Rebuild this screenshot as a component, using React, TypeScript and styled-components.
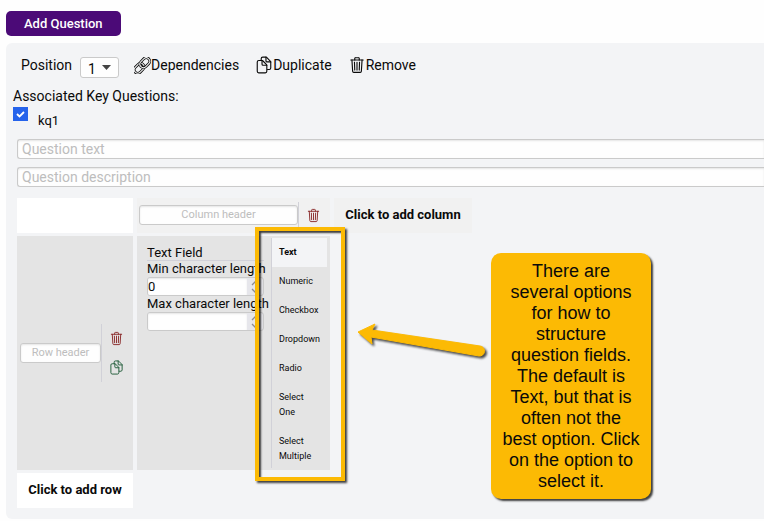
import React from "react";
import styled, { createGlobalStyle, css } from "styled-components";
import { IoTrashOutline, IoDocumentsOutline } from "react-icons/io5";

const GlobalStyle = createGlobalStyle`
  *, *::before, *::after { box-sizing: border-box; }
  body {
    margin: 0;
    overflow-x: hidden;
    background: #fefefe;
    color: #0a0a0a;
    font-family: Roboto, "Liberation Sans", sans-serif;
    font-size: 14px;
    line-height: 18px;
  }
  button, input, select { font: inherit; color: inherit; }
  button { border: 0; padding: 0; background: none; cursor: pointer; }
`;

const Page = styled.main`
  position: relative;
  padding: 11px 0 2px 6px;
`;

const PrimaryButton = styled.button`
  display: block;
  height: 25px;
  padding: 0 18px;
  border-radius: 5px;
  background: #4b0a77;
  color: #fefefe;
  font-size: 13px;
  font-weight: 500;
`;

const Panel = styled.section`
  margin-top: 7px;
  padding: 12px 0 11px 11px;
  border-radius: 6px 0 0 6px;
  background: #f3f4f6;
`;

const Toolbar = styled.div`
  display: flex;
  align-items: flex-start;
  height: 32px;
  padding: 1px 0 0 4px;
`;

const PositionLabel = styled.label`
  display: flex;
  gap: 8px;
  margin-right: 15px;
`;

const SelectWrap = styled.span`
  position: relative;
  display: block;
  margin-top: 1px;
`;

const PositionSelect = styled.select`
  appearance: none;
  display: block;
  width: 39px;
  height: 21px;
  padding: 2px 0 0 7px;
  border: 1px solid #cacaca;
  border-radius: 3px;
  background: #fefefe;
  line-height: 16px;
`;

const Caret = styled.svg`
  position: absolute;
  right: 8px;
  top: 8px;
  pointer-events: none;
`;

const ToolButton = styled.button`
  display: flex;
  align-items: center;
  height: 18px;
  margin-right: 16px;
  svg { flex: none; }
`;

const KeyQuestions = styled.fieldset`
  margin: 0 0 8px -4px;
  padding: 0;
  border: 0;
  legend { padding: 0; }
`;

const CheckLabel = styled.label`
  display: flex;
  gap: 10px;
  height: 26px;
  font-size: 13px;
  span { padding-top: 7px; }
`;

const CheckBox = styled.input`
  appearance: none;
  width: 15px;
  height: 14px;
  margin: 2px 0 0;
  background: #2563eb
    url("data:image/svg+xml,%3Csvg xmlns='http://www.w3.org/2000/svg' viewBox='0 0 15 14'%3E%3Cpath d='M4 7l2.500 2.500L11 5' fill='none' stroke='white' stroke-width='1.800'/%3E%3C/svg%3E")
    center / 15px 14px no-repeat;
`;

const field = css`
  display: block;
  height: 20px;
  margin: 0;
  border: 1px solid #cacaca;
  border-radius: 3px;
  background: #fefefe;
  box-shadow: inset 0 1px 2px rgba(10, 10, 10, 0.1);
  &::placeholder { color: #bdbdbd; opacity: 1; }
`;

const WideInput = styled.input`
  ${field}
  width: 100%;
  margin-bottom: 8px;
  padding: 0 4px;
  border-right: 0;
  border-radius: 3px 0 0 3px;
`;

const HeaderInput = styled.input`
  ${field}
  flex: 1;
  min-width: 0;
  padding: 0 4px 1px;
  font-size: 11px;
  text-align: center;
`;

const Matrix = styled.div`
  display: grid;
  grid-template-columns: 116px 193px 138px;
  grid-template-rows: 35px auto 35px;
  gap: 3px 4px;
  margin-top: 11px;
`;

const Cell = styled.div<{ $tone: "white" | "light" | "grey" }>`
  display: flex;
  align-items: center;
  background: ${({ $tone }) =>
    ({ white: "#ffffff", light: "#f1f1f1", grey: "#e4e4e4" })[$tone]};
`;

const ColumnHeadCell = styled(Cell)`
  padding: 0 2px 1px;
`;

const RowHeadCell = styled(Cell)`
  padding: 0 2px 0 3px;
`;

const AddButton = styled.button<{ $tone: "white" | "light" }>`
  padding-bottom: 2px;
  font-size: 13px;
  font-weight: 700;
  background: ${({ $tone }) => ($tone === "white" ? "#ffffff" : "#f1f1f1")};
`;

const Actions = styled.div<{ $tall?: boolean }>`
  display: flex;
  flex-direction: column;
  align-items: center;
  justify-content: center;
  gap: 14px;
  flex: none;
  width: 30px;
  height: ${({ $tall }) => ($tall ? "58px" : "27px")};
  border-left: 1px solid #d1d1d8;
`;

const IconButton = styled.button<{ $color: string }>`
  display: flex;
  color: ${({ $color }) => $color};
`;

const FieldCell = styled(Cell)`
  align-items: flex-start;
  padding: 2px 3px 2px 10px;
`;

const Settings = styled.div`
  flex: 1;
  min-width: 0;
  padding-top: 6px;
  font-size: 13px;
`;

const FieldTitle = styled.div`
  height: 17px;
  border-bottom: 1px solid #d1d1d8;
`;

const Setting = styled.label`
  display: block;
  white-space: nowrap;
  line-height: 16px;
`;

const NumberBox = styled.span`
  display: flex;
  width: 117px;
  height: 19px;
  overflow: hidden;
  border: 1px solid #cacaca;
  border-radius: 3px;
  background: #e6e6eb;
  color: #8b8b90;
  svg { margin: auto; }
`;

const NumberInput = styled.input`
  appearance: textfield;
  width: 99px;
  padding: 0;
  border: 0;
  background: #fefefe;
  color: #0a0a0a;
  box-shadow: inset 0 1px 2px rgba(10, 10, 10, 0.1);
  &::-webkit-inner-spin-button { display: none; }
`;

const TypeList = styled.div`
  width: 56px;
  margin-left: 7px;
  border-left: 1px solid #d1d1d8;
`;

const TypeButton = styled.button<{ $active?: boolean }>`
  display: block;
  width: 100%;
  padding: 7px;
  font-size: 9px;
  line-height: 15px;
  text-align: left;
  font-weight: ${({ $active }) => ($active ? 700 : 400)};
  background: ${({ $active }) => ($active ? "#f3f4f6" : "transparent")};
  &:last-child { padding-bottom: 4px; }
`;

const Highlight = styled.div`
  position: absolute;
  left: 255px;
  top: 227px;
  width: 90px;
  height: 254px;
  border: 4px solid #fcba04;
  box-shadow: 2px 2px 2px rgba(0, 0, 0, 0.75), inset 2px 2px 2px rgba(0, 0, 0, 0.75);
  pointer-events: none;
`;

const Arrow = styled.svg`
  position: absolute;
  left: 355px;
  top: 318px;
  filter: drop-shadow(2px 2px 1px rgba(0, 0, 0, 0.7));
  pointer-events: none;
`;

const Callout = styled.aside`
  position: absolute;
  left: 491px;
  top: 253px;
  width: 160px;
  padding: 8px 11px 7px;
  border-radius: 10px;
  background: #fcba04;
  box-shadow: 2px 2px 2px rgba(0, 0, 0, 0.75);
  font-family: "Liberation Sans", Arial, sans-serif;
  font-size: 18px;
  line-height: 21px;
  text-align: center;
`;

function LinkIcon() {
  return (
    <svg width="17" height="17" viewBox="0 0 17 17" fill="none">
      <g transform="rotate(-45 8 8.500)">
        <rect x="-1.500" y="5" width="11" height="7" rx="3.500" stroke="currentColor" strokeWidth="2.700" />
        <rect x="-1.500" y="5" width="11" height="7" rx="3.500" stroke="#f3f4f6" strokeWidth="1.100" />
        <rect x="6.500" y="5" width="11" height="7" rx="3.500" stroke="currentColor" strokeWidth="2.700" />
        <rect x="6.500" y="5" width="11" height="7" rx="3.500" stroke="#f3f4f6" strokeWidth="1.100" />
      </g>
    </svg>
  );
}

function StepperIcon() {
  return (
    <svg width="10" height="14" viewBox="0 0 10 14" fill="none" stroke="currentColor" strokeWidth="1.300">
      <path d="M2 5l3-3 3 3M2 9l3 3 3-3" />
    </svg>
  );
}

const fieldTypes = ["Text", "Numeric", "Checkbox", "Dropdown", "Radio", "Select One", "Select Multiple"];

function NumberSetting({ label, value }: { label: string; value?: number }) {
  return (
    <Setting>
      {label}
      <NumberBox>
        <NumberInput type="number" defaultValue={value} />
        <StepperIcon />
      </NumberBox>
    </Setting>
  );
}

export default function App() {
  return (
    <Page>
      <GlobalStyle />
      <PrimaryButton type="button">Add Question</PrimaryButton>
      <Panel>
        <Toolbar>
          <PositionLabel>
            Position
            <SelectWrap>
              <PositionSelect defaultValue="1">
                <option>1</option>
              </PositionSelect>
              <Caret width="9" height="5" viewBox="0 0 9 5">
                <path d="M0 0h9L4.500 5z" fill="#444" />
              </Caret>
            </SelectWrap>
          </PositionLabel>
          <ToolButton type="button"><LinkIcon />Dependencies</ToolButton>
          <ToolButton type="button"><IoDocumentsOutline size={18} />Duplicate</ToolButton>
          <ToolButton type="button"><IoTrashOutline size={18} />Remove</ToolButton>
        </Toolbar>
        <KeyQuestions>
          <legend>Associated Key Questions:</legend>
          <CheckLabel>
            <CheckBox type="checkbox" defaultChecked />
            <span>kq1</span>
          </CheckLabel>
        </KeyQuestions>
        <WideInput aria-label="Question text" placeholder="Question text" />
        <WideInput aria-label="Question description" placeholder="Question description" />
        <Matrix>
          <Cell $tone="white" />
          <ColumnHeadCell $tone="light">
            <HeaderInput aria-label="Column header" placeholder="Column header" />
            <Actions>
              <IconButton type="button" aria-label="Remove column" $color="#8a2a2a">
                <IoTrashOutline size={15} />
              </IconButton>
            </Actions>
          </ColumnHeadCell>
          <AddButton type="button" $tone="light">Click to add column</AddButton>
          <RowHeadCell $tone="grey">
            <HeaderInput aria-label="Row header" placeholder="Row header" />
            <Actions $tall>
              <IconButton type="button" aria-label="Remove row" $color="#8a2a2a">
                <IoTrashOutline size={15} />
              </IconButton>
              <IconButton type="button" aria-label="Duplicate row" $color="#1f5b38">
                <IoDocumentsOutline size={15} />
              </IconButton>
            </Actions>
          </RowHeadCell>
          <FieldCell $tone="grey">
            <Settings>
              <FieldTitle>Text Field</FieldTitle>
              <NumberSetting label="Min character length" value={0} />
              <NumberSetting label="Max character length" />
            </Settings>
            <TypeList>
              {fieldTypes.map((type, index) => (
                <TypeButton key={type} type="button" $active={index === 0}>{type}</TypeButton>
              ))}
            </TypeList>
          </FieldCell>
          <span />
          <AddButton type="button" $tone="white">Click to add row</AddButton>
        </Matrix>
      </Panel>
      <Highlight />
      <Arrow width="136" height="44" viewBox="0 0 136 44" fill="#fcba04">
        <path d="M3 14L20 6l-3 6 108 16a5 5 0 0 1-1 10L16 19l1 7z" stroke="#fcba04" strokeLinejoin="round" />
      </Arrow>
      <Callout>
        There are several options for how to structure question fields. The default is Text, but
        that is often not the best option. Click on the option to select it.
      </Callout>
    </Page>
  );
}
